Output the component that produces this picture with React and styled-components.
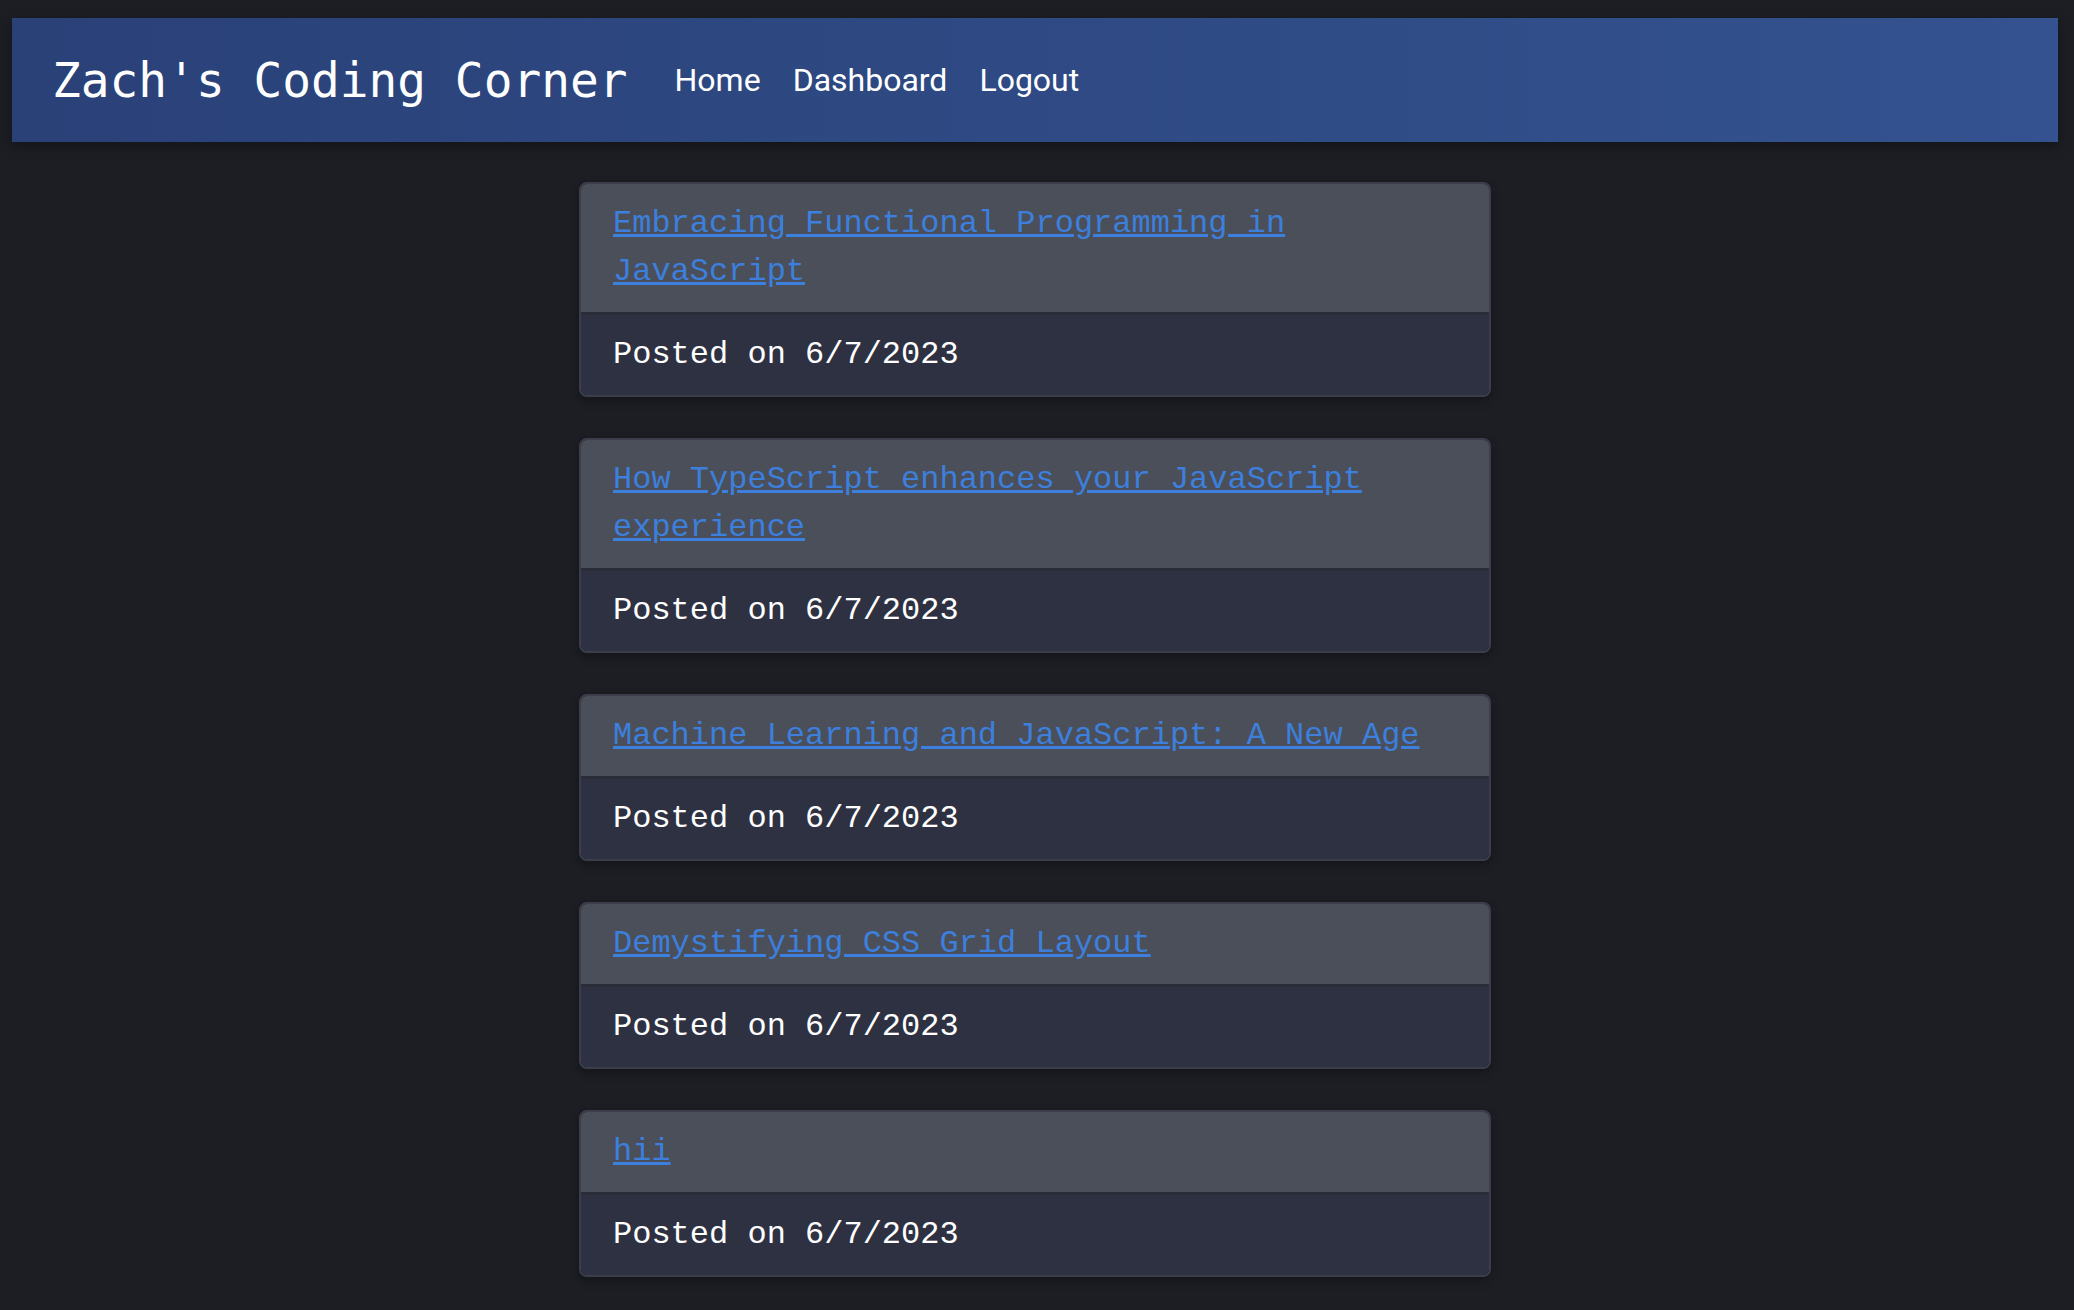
import styled, { createGlobalStyle } from "styled-components";

const GlobalStyle = createGlobalStyle`
  html, body {
    margin: 0;
    padding: 0;
    background: #1c1e24;
  }
  body {
    padding: 18px 16px 0 12px;
  }
`

const Header = styled.header`
  display: flex;
  align-items: center;
  height: 124px;
  padding: 0 40px;
  box-sizing: border-box;
  background: linear-gradient(90deg, #2a4178 0%, #33528f 100%);
  box-shadow: 0 4px 12px rgba(0, 0, 0, 0.35);
`

const Brand = styled.h1`
  margin: 0 47px 0 0;
  font-family: "DejaVu Sans Mono", monospace;
  font-weight: normal;
  font-size: 47.8px;
  color: #ffffff;
`

const Nav = styled.nav`
  display: flex;
  gap: 32px;
`

const NavLink = styled.a`
  font-family: Roboto, "Noto Sans", sans-serif;
  font-size: 32px;
  font-weight: 400;
  color: #ffffff;
  text-decoration: none;
`

const List = styled.main`
  display: flex;
  flex-direction: column;
  align-items: center;
  gap: 41px;
  padding: 40px 0 40px;
`

const Card = styled.article`
  width: 912px;
  border: 2px solid #3b3e4a;
  border-radius: 8px;
  overflow: hidden;
  box-shadow: 0 4px 10px rgba(0, 0, 0, 0.3);
  box-sizing: border-box;
  font-family: "Liberation Mono", "Courier New", monospace;
  font-size: 32px;
  line-height: 48px;
`

const CardTitle = styled.div`
  background: #4b4f5a;
  padding: 16px 32px;
  border-bottom: 3px solid #2a2c37;
`

const TitleLink = styled.a`
  color: #3c7fdc;
  text-decoration: underline;
`

const CardFooter = styled.div`
  background: #2e3142;
  color: #ffffff;
  padding: 16px 32px;
`

const posts = [
  "Embracing Functional Programming in JavaScript",
  "How TypeScript enhances your JavaScript experience",
  "Machine Learning and JavaScript: A New Age",
  "Demystifying CSS Grid Layout",
  "hii",
];

const App = () => {
  return (
    <>
      <GlobalStyle />
      <Header>
        <Brand>Zach's Coding Corner</Brand>
        <Nav>
          <NavLink href="#">Home</NavLink>
          <NavLink href="#">Dashboard</NavLink>
          <NavLink href="#">Logout</NavLink>
        </Nav>
      </Header>
      <List>
        {posts.map((title) => (
          <Card key={title}>
            <CardTitle>
              <TitleLink href="#">{title}</TitleLink>
            </CardTitle>
            <CardFooter>Posted on 6/7/2023</CardFooter>
          </Card>
        ))}
      </List>
    </>
  )
}

export default App;
